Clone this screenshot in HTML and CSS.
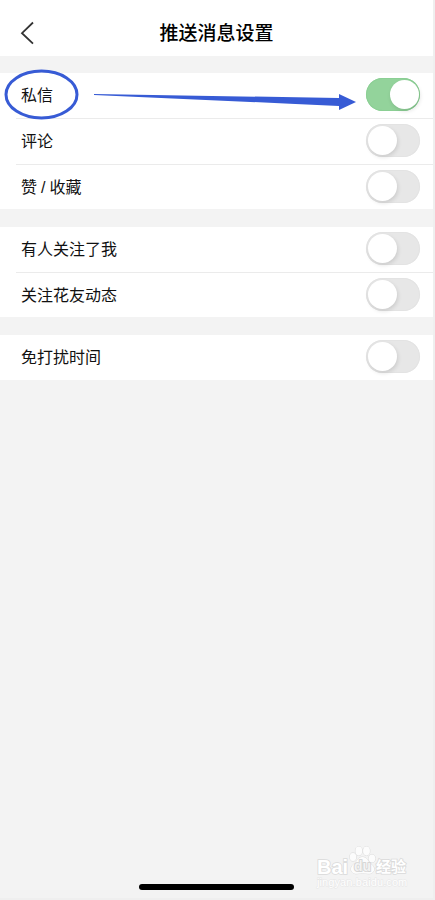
FILE: index.html
```html
<!DOCTYPE html>
<html lang="zh-CN">
<head>
    <meta charset="UTF-8">
    <title>推送消息设置</title>
    <link rel="stylesheet" href="styles.css">
</head>
<body>
<div class="page">
    <header class="header">
        <svg class="back" width="14" height="24" viewBox="0 0 14 24">
            <path d="M13 1.500L2 12.200l11 10.500"/>
        </svg>
        <h1>推送消息设置</h1>
    </header>
    <ul class="group">
        <li class="row"><span>私信</span><i class="switch on"></i></li>
        <li class="row"><span>评论</span><i class="switch"></i></li>
        <li class="row"><span>赞 / 收藏</span><i class="switch"></i></li>
    </ul>
    <ul class="group">
        <li class="row"><span>有人关注了我</span><i class="switch"></i></li>
        <li class="row"><span>关注花友动态</span><i class="switch"></i></li>
    </ul>
    <ul class="group single">
        <li class="row"><span>免打扰时间</span><i class="switch"></i></li>
    </ul>

    <!-- 标注 -->
    <svg class="mark" width="433" height="130" viewBox="0 0 433 130">
        <ellipse cx="41.5" cy="94.5" rx="35.5" ry="23.500"/>
        <path d="M94 94L339 98V94L356 102L339 110V106L290 103.700L94 95Z"/>
    </svg>

    <!-- 水印 -->
    <div class="watermark">
        <div class="brand">
            <span class="bai">Bai</span>
            <span class="paw">
                <svg width="27" height="31" viewBox="0 0 27 31">
                    <ellipse cx="4" cy="12" rx="3.200" ry="4.100"/>
                    <ellipse cx="9.800" cy="6" rx="3.400" ry="4.400"/>
                    <ellipse cx="17.500" cy="6" rx="3.400" ry="4.400"/>
                    <ellipse cx="23" cy="13.500" rx="3.200" ry="4.100"/>
                    <path d="M13.500 12C9 12 8.500 16 5.500 18.500C-1 23 2.500 29.500 8 28.800C12 28 15 28 19 28.800C25 29.500 28 23 21.500 18.500C18.500 16 18 12 13.500 12Z"/>
                </svg>
                <b>du</b>
            </span>
            <span class="exp">经验</span>
        </div>
        <div class="site">jingyan.baidu.com</div>
    </div>
    <div class="home-bar"></div>
</div>
</body>
</html>
```
FILE: styles.css
```css
* {
    box-sizing: border-box;
}

body {
    margin: 0;
    background-color: #efefef;
    font-family: "Liberation Sans", "Noto Sans CJK SC", sans-serif;
    color: #111;
}

.page {
    position: relative;
    width: 433px;
    height: 898px;
    background-color: #f3f3f3;
    overflow: hidden;
}

.header {
    display: flex;
    align-items: center;
    justify-content: center;
    height: 56px;
    padding-top: 12px;
    background-color: #fff;
}

.header h1 {
    margin: 0;
    font-size: 19px;
    font-weight: 500;
    line-height: 28px;
    color: #000;
}

.back {
    position: absolute;
    left: 20px;
    top: 21px;
    fill: none;
    stroke: #333;
    stroke-width: 1.8;
}

.group {
    margin: 17px 0 0;
    padding: 0;
    list-style: none;
    background-color: #fff;
}

.group + .group {
    margin-top: 18px;
}

.row {
    display: flex;
    align-items: center;
    justify-content: space-between;
    height: 46px;
    margin-left: 16px;
    padding: 0 13px 2px 5px;
    border-bottom: 1px solid #ebebeb;
    font-size: 16px;
    word-spacing: -.4px;
}

.row span {
    padding-bottom: 2px;
}

.row:last-child {
    height: 44px;
    padding-bottom: 1px;
    border-bottom: none;
}

.single .row:last-child {
    height: 45px;
    padding-bottom: 2px;
}

.switch {
    width: 54px;
    height: 33px;
    padding: 2px;
    border-radius: 17px;
    background-color: #e7e7e7;
    box-shadow: inset 0 0 0 1px #e3e3e3;
}

.switch::before {
    content: "";
    display: block;
    width: 29px;
    height: 29px;
    border-radius: 50%;
    background-color: #fff;
    box-shadow: 1px 2px 4px rgba(0, 0, 0, .12);
}

.switch.on {
    background-color: #93d39b;
    box-shadow: inset 0 0 0 1px #8bcf94;
}

.switch.on::before {
    margin-left: 22px;
}

.mark {
    position: absolute;
    left: 0;
    top: 0;
}

.mark ellipse {
    fill: none;
    stroke: #375bd5;
    stroke-width: 3;
}

.mark path {
    fill: #375bd5;
}

.watermark {
    position: absolute;
    left: 317px;
    top: 845px;
    width: 92px;
    color: #fff;
    -webkit-text-stroke: 1.6px #dadada;
    paint-order: stroke fill;
}

.brand {
    display: flex;
    height: 31px;
    font-weight: bold;
    line-height: 20px;
}

.bai {
    width: 32px;
    padding-top: 12px;
    font-size: 20px;
}

.paw {
    position: relative;
    width: 27px;
}

.paw svg {
    display: block;
    fill: #fcfcfc;
    stroke: #dcdcdc;
    stroke-width: 1;
}

.paw b {
    position: absolute;
    left: 5px;
    top: 11px;
    font-size: 14px;
    color: #f3f3f3;
    -webkit-text-stroke: 1.6px #d0d0d0;
}

.exp {
    padding-top: 12px;
    font-size: 15px;
    white-space: nowrap;
}

.site {
    font-size: 11px;
    line-height: 12px;
    letter-spacing: .1px;
    color: #fff;
    -webkit-text-stroke: 1px #e6e6e6;
}

.home-bar {
    position: absolute;
    left: 139px;
    top: 884px;
    width: 155px;
    height: 6px;
    border-radius: 3px;
    background-color: #000;
}
```
